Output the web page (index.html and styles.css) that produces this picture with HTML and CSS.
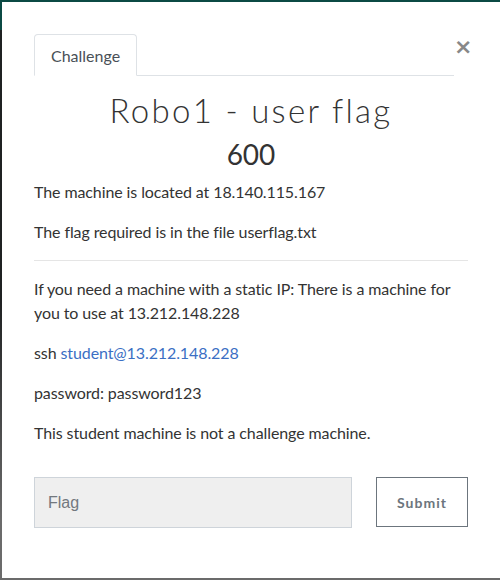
FILE: index.html
```html
<!DOCTYPE html>
<html>
<head>
<meta charset="utf-8">
<link rel="stylesheet" href="styles.css">
</head>
<body>
<div class="modal">
  <div class="head">
    <ul class="tabs">
      <li class="tab">Challenge</li>
    </ul>
    <button class="close" type="button">&times;</button>
  </div>
  <h2 class="title">Robo1 - user flag</h2>
  <h3 class="value">600</h3>
  <div class="desc">
    <p>The machine is located at 18.140.115.167</p>
    <p>The flag required is in the file userflag.txt</p>
    <hr>
    <p>If you need a machine with a static IP: There is a machine for you to use at 13.212.148.228</p>
    <p>ssh <a href="#">student@13.212.148.228</a></p>
    <p>password: password123</p>
    <p>This student machine is not a challenge machine.</p>
  </div>
  <form class="submit-row">
    <input class="flag" type="text" placeholder="Flag">
    <button class="btn" type="button">Submit</button>
  </form>
</div>
</body>
</html>
```
FILE: styles.css
```css
html, body {
  margin: 0;
  padding: 0;
  height: 580px;
  overflow: hidden;
}
body {
  background: linear-gradient(to bottom, #0b4a44 0, #0b4a44 30px, #1f2122 30px, #1f2122 300px, #6b6b6b 520px);
  font-family: Lato, "Open Sans", sans-serif;
  color: #333;
}
.modal {
  margin: 2px 0 0 2px;
  width: 498px;
  height: 576px;
  box-sizing: border-box;
  background: #fff;
  padding: 32px 32px 0 32px;
}
.head {
  display: flex;
  align-items: flex-start;
}
.tabs {
  flex: 1;
  list-style: none;
  margin: 0;
  padding: 0;
  display: flex;
  border-bottom: 1px solid #dee2e6;
}
.tab {
  margin-bottom: -1px;
  border: 1px solid #dee2e6;
  border-bottom-color: #fff;
  border-radius: 4px 4px 0 0;
  padding: 0 16px;
  height: 42px;
  line-height: 41px;
  box-sizing: border-box;
  font-size: 16px;
  color: #495057;
  background: #fff;
}
.close {
  width: 14px;
  padding: 0;
  margin: 1px 0 0 0;
  border: 0;
  background: none;
  font-family: "DejaVu Sans", sans-serif;
  font-size: 22px;
  font-weight: bold;
  line-height: 24px;
  color: #888;
  text-align: center;
}
.title {
  margin: 14px 0 0;
  text-align: center;
  font-family: Lato, sans-serif;
  font-weight: 300;
  font-size: 33px;
  line-height: 40px;
  letter-spacing: 2.3px;
  color: #333;
}
.value {
  margin: 6px 0 8px;
  text-align: center;
  font-family: Lato, sans-serif;
  font-weight: 400;
  font-size: 28px;
  line-height: 36px;
  color: #333;
}
.desc p {
  margin: 0 0 16px;
  font-size: 16px;
  line-height: 24px;
  letter-spacing: -0.1px;
}
.desc hr {
  margin: 16px 0;
  border: 0;
  border-top: 1px solid #e5e5e5;
}
.desc a {
  color: #3b6fc4;
  text-decoration: none;
}
.submit-row {
  display: flex;
  gap: 24px;
  margin-top: 32px;
}
.flag {
  width: 318px;
  height: 51px;
  box-sizing: border-box;
  margin: 0;
  padding: 0 13px;
  background: #efefef;
  border: 1px solid #ced4da;
  font-family: "Liberation Sans", Arial, sans-serif;
  font-size: 16px;
  color: #495057;
}
.flag::placeholder {
  color: #72787e;
}
.btn {
  width: 92px;
  height: 50px;
  margin: 0;
  padding: 0;
  background: #fff;
  border: 1px solid #6c757d;
  font-family: Lato, sans-serif;
  font-weight: 700;
  font-size: 14px;
  letter-spacing: 1px;
  color: #6c757d;
}
```
